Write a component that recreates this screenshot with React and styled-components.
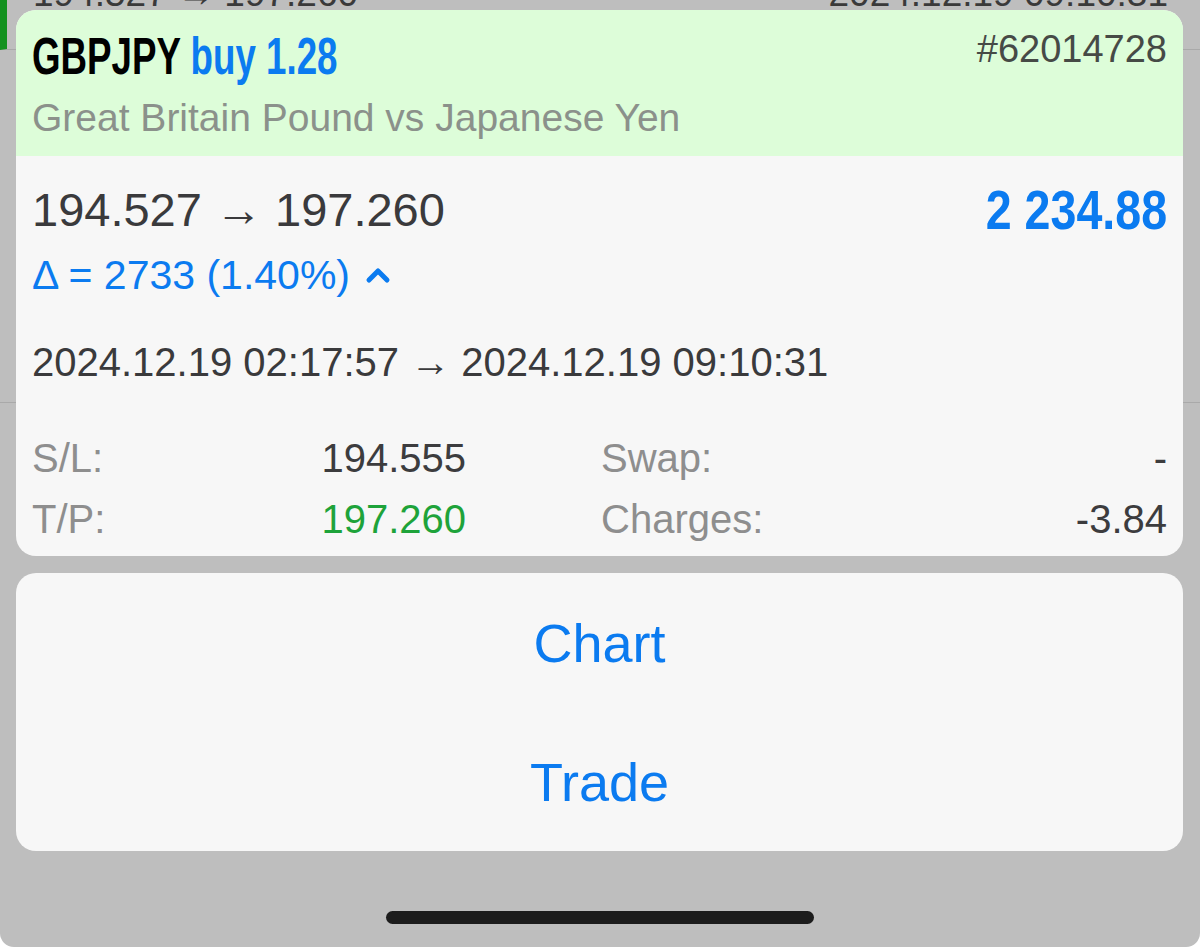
import React from 'react';
import styled, { createGlobalStyle } from 'styled-components';

const GlobalStyle = createGlobalStyle`
  html, body {
    margin: 0;
    padding: 0;
    background: #ffffff;
  }
  body {
    font-family: "Liberation Sans", Arial, sans-serif;
    overflow: hidden;
  }
`;

const BLUE = '#0b7bf0';

const Screen = styled.div`
  position: relative;
  width: 1200px;
  height: 947px;
  overflow: hidden;
  background: #bebebe;
  border-radius: 0 0 14px 14px;
`;

const BackList = styled.div`
  display: flex;
  flex-direction: column;
`;

const BackRow = styled.div`
  height: ${(p) => p.h}px;
  display: flex;
  align-items: flex-end;
  justify-content: space-between;
  padding: 0 32px 34px 26px;
  box-sizing: border-box;
  border-bottom: 1px solid #a9a9a9;
  font-size: 37px;
  line-height: 42px;
  color: #3a3a3a;
  border-left: ${(p) => (p.profit ? '7px solid #13911f' : 'none')};
`;

const Sheet = styled.div`
  position: absolute;
  top: 10px;
  left: 16px;
  right: 17px;
  display: flex;
  flex-direction: column;
  gap: 17px;
`;

const Card = styled.div`
  border-radius: 20px;
  overflow: hidden;
  background: #f7f7f7;
`;

const Header = styled.div`
  background: #ddfdd9;
  height: 146px;
  box-sizing: border-box;
  padding: 18px 16px 0 16px;
  display: flex;
  justify-content: space-between;
  align-items: flex-start;
`;

const TitleBlock = styled.div`
  display: flex;
  flex-direction: column;
  align-items: flex-start;
`;

/* the app uses a condensed bold face; squeeze the sans to match */
const Title = styled.div`
  font-weight: 700;
  font-size: 51px;
  line-height: 58px;
  color: #000;
  white-space: nowrap;
  transform: scaleX(0.72);
  transform-origin: left center;
`;

const Accent = styled.span`
  color: ${BLUE};
`;

const Subtitle = styled.div`
  font-size: 39px;
  line-height: 44px;
  color: #8b918b;
  margin-top: 10px;
  white-space: nowrap;
`;

const Ticket = styled.div`
  font-size: 38px;
  line-height: 44px;
  color: #464a46;
  margin-top: -1px;
`;

const Body = styled.div`
  padding: 28px 16px 15px 16px;
  display: flex;
  flex-direction: column;
`;

const PriceRow = styled.div`
  display: flex;
  justify-content: space-between;
  align-items: center;
`;

const Prices = styled.div`
  font-size: 47px;
  line-height: 52px;
  color: #3a3a3c;
  white-space: nowrap;
`;

const Profit = styled.div`
  font-weight: 700;
  font-size: 55px;
  line-height: 52px;
  color: ${BLUE};
  white-space: nowrap;
  transform: scaleX(0.847);
  transform-origin: right center;
`;

const Delta = styled.div`
  display: flex;
  align-items: center;
  gap: 15px;
  font-size: 41px;
  line-height: 44px;
  color: ${BLUE};
  margin-top: 17px;
`;

const Dates = styled.div`
  font-size: 40px;
  line-height: 44px;
  color: #3a3a3c;
  margin-top: 43px;
  white-space: nowrap;
`;

const Stats = styled.div`
  display: grid;
  grid-template-columns: 434px 1fr;
  column-gap: 135px;
  row-gap: 17px;
  margin-top: 52px;
`;

const Stat = styled.div`
  display: flex;
  justify-content: space-between;
  font-size: 40px;
  line-height: 44px;
`;

const Label = styled.span`
  color: #8e8e8e;
`;

const Value = styled.span`
  color: ${(p) => p.color || '#3c3c3e'};
`;

const Actions = styled(Card)`
  display: flex;
  flex-direction: column;
`;

const Action = styled.div`
  height: 139px;
  display: flex;
  align-items: center;
  justify-content: center;
  font-size: 54px;
  color: ${BLUE};
`;

const HomeBar = styled.div`
  position: absolute;
  left: 386px;
  top: 911px;
  width: 428px;
  height: 13px;
  border-radius: 7px;
  background: #1c1c1c;
`;

const ChevronUp = () => (
  <svg width="26" height="18" viewBox="0 0 26 18">
    <polyline
      points="4,14 13,5 22,14"
      fill="none"
      stroke={BLUE}
      strokeWidth="5"
      strokeLinecap="round"
      strokeLinejoin="round"
    />
  </svg>
);

const stats = [
  { label: 'S/L:', value: '194.555' },
  { label: 'Swap:', value: '-' },
  { label: 'T/P:', value: '197.260', color: '#1ea33a' },
  { label: 'Charges:', value: '-3.84' },
];

export default function App() {
  return (
    <>
      <GlobalStyle />
      <Screen>
        <BackList>
          <BackRow h={50} profit>
            <span>194.527 → 197.260</span>
            <span>2024.12.19 09:10:31</span>
          </BackRow>
          <BackRow h={353} />
        </BackList>

        <Sheet>
          <Card>
            <Header>
              <TitleBlock>
                <Title>
                  GBPJPY <Accent>buy 1.28</Accent>
                </Title>
                <Subtitle>Great Britain Pound vs Japanese Yen</Subtitle>
              </TitleBlock>
              <Ticket>#62014728</Ticket>
            </Header>
            <Body>
              <PriceRow>
                <Prices>194.527 → 197.260</Prices>
                <Profit>2 234.88</Profit>
              </PriceRow>
              <Delta>
                <span>Δ = 2733 (1.40%)</span>
                <ChevronUp />
              </Delta>
              <Dates>2024.12.19 02:17:57 → 2024.12.19 09:10:31</Dates>
              <Stats>
                {stats.map((s) => (
                  <Stat key={s.label}>
                    <Label>{s.label}</Label>
                    <Value color={s.color}>{s.value}</Value>
                  </Stat>
                ))}
              </Stats>
            </Body>
          </Card>
          <Actions>
            <Action>Chart</Action>
            <Action>Trade</Action>
          </Actions>
        </Sheet>
        <HomeBar />
      </Screen>
    </>
  );
}
